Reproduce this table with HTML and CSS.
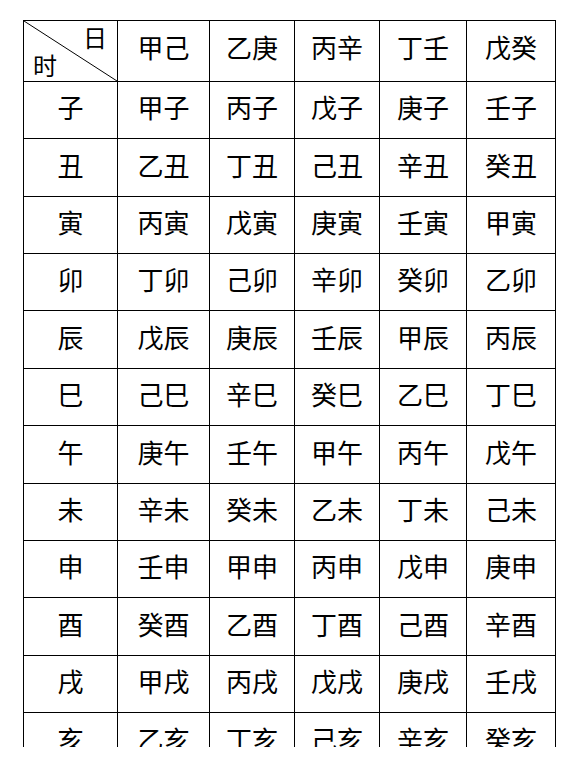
FILE: index.html
```html
<!DOCTYPE html>
<html lang="zh">
<head>
<meta charset="utf-8">
<title>日时干支表</title>
<link rel="stylesheet" href="styles.css">
</head>
<body>
<div class="clip">
  <div class="grid">
    <div class="cell corner">
      <svg class="diag" viewBox="0 0 100 100" preserveAspectRatio="none"><line x1="0" y1="0" x2="100" y2="100" stroke="#000" stroke-width="1" vector-effect="non-scaling-stroke"/></svg>
      <span class="ri">日</span>
      <span class="shi">时</span>
    </div>
    <div class="cell head">甲己</div>
    <div class="cell head">乙庚</div>
    <div class="cell head">丙辛</div>
    <div class="cell head">丁壬</div>
    <div class="cell head">戊癸</div>

    <div class="cell">子</div><div class="cell">甲子</div><div class="cell">丙子</div><div class="cell">戊子</div><div class="cell">庚子</div><div class="cell">壬子</div>
    <div class="cell">丑</div><div class="cell">乙丑</div><div class="cell">丁丑</div><div class="cell">己丑</div><div class="cell">辛丑</div><div class="cell">癸丑</div>
    <div class="cell">寅</div><div class="cell">丙寅</div><div class="cell">戊寅</div><div class="cell">庚寅</div><div class="cell">壬寅</div><div class="cell">甲寅</div>
    <div class="cell">卯</div><div class="cell">丁卯</div><div class="cell">己卯</div><div class="cell">辛卯</div><div class="cell">癸卯</div><div class="cell">乙卯</div>
    <div class="cell">辰</div><div class="cell">戊辰</div><div class="cell">庚辰</div><div class="cell">壬辰</div><div class="cell">甲辰</div><div class="cell">丙辰</div>
    <div class="cell">巳</div><div class="cell">己巳</div><div class="cell">辛巳</div><div class="cell">癸巳</div><div class="cell">乙巳</div><div class="cell">丁巳</div>
    <div class="cell">午</div><div class="cell">庚午</div><div class="cell">壬午</div><div class="cell">甲午</div><div class="cell">丙午</div><div class="cell">戊午</div>
    <div class="cell">未</div><div class="cell">辛未</div><div class="cell">癸未</div><div class="cell">乙未</div><div class="cell">丁未</div><div class="cell">己未</div>
    <div class="cell">申</div><div class="cell">壬申</div><div class="cell">甲申</div><div class="cell">丙申</div><div class="cell">戊申</div><div class="cell">庚申</div>
    <div class="cell">酉</div><div class="cell">癸酉</div><div class="cell">乙酉</div><div class="cell">丁酉</div><div class="cell">己酉</div><div class="cell">辛酉</div>
    <div class="cell">戌</div><div class="cell">甲戌</div><div class="cell">丙戌</div><div class="cell">戊戌</div><div class="cell">庚戌</div><div class="cell">壬戌</div>
    <div class="cell">亥</div><div class="cell">乙亥</div><div class="cell">丁亥</div><div class="cell">己亥</div><div class="cell">辛亥</div><div class="cell">癸亥</div>
  </div>
</div>
</body>
</html>
```

FILE: styles.css
```css
html, body {
  margin: 0;
  padding: 0;
  background: #fff;
}

body {
  font-family: "Noto Sans CJK SC", "Noto Sans", sans-serif;
  color: #000;
}

.clip {
  margin: 20px 0 0 23px;
  height: 727px;
  width: 540px;
  overflow: hidden;
}

.grid {
  display: grid;
  grid-template-columns: 94px 92px 85px 85px 87px 89px;
  grid-template-rows: 61px 57px 58px 57px 57px 58px 57px 58px 57px 57px 58px 57px 58px;
  width: 532px;
  border-top: 1px solid #000;
  border-left: 1px solid #000;
}

.cell {
  border-right: 1px solid #000;
  border-bottom: 1px solid #000;
  display: flex;
  align-items: center;
  justify-content: center;
  font-size: 26px;
  line-height: 1;
  padding-bottom: 6px;
  box-sizing: border-box;
}

.head {
  padding-bottom: 8px;
}

.corner {
  position: relative;
  flex-direction: column;
  justify-content: space-between;
  align-items: stretch;
  padding: 4px 10px 4px 9px;
  font-size: 24px;
}

.diag {
  position: absolute;
  left: 0;
  top: 0;
  width: 100%;
  height: 100%;
}

.ri {
  align-self: flex-end;
}

.shi {
  align-self: flex-start;
}
```
